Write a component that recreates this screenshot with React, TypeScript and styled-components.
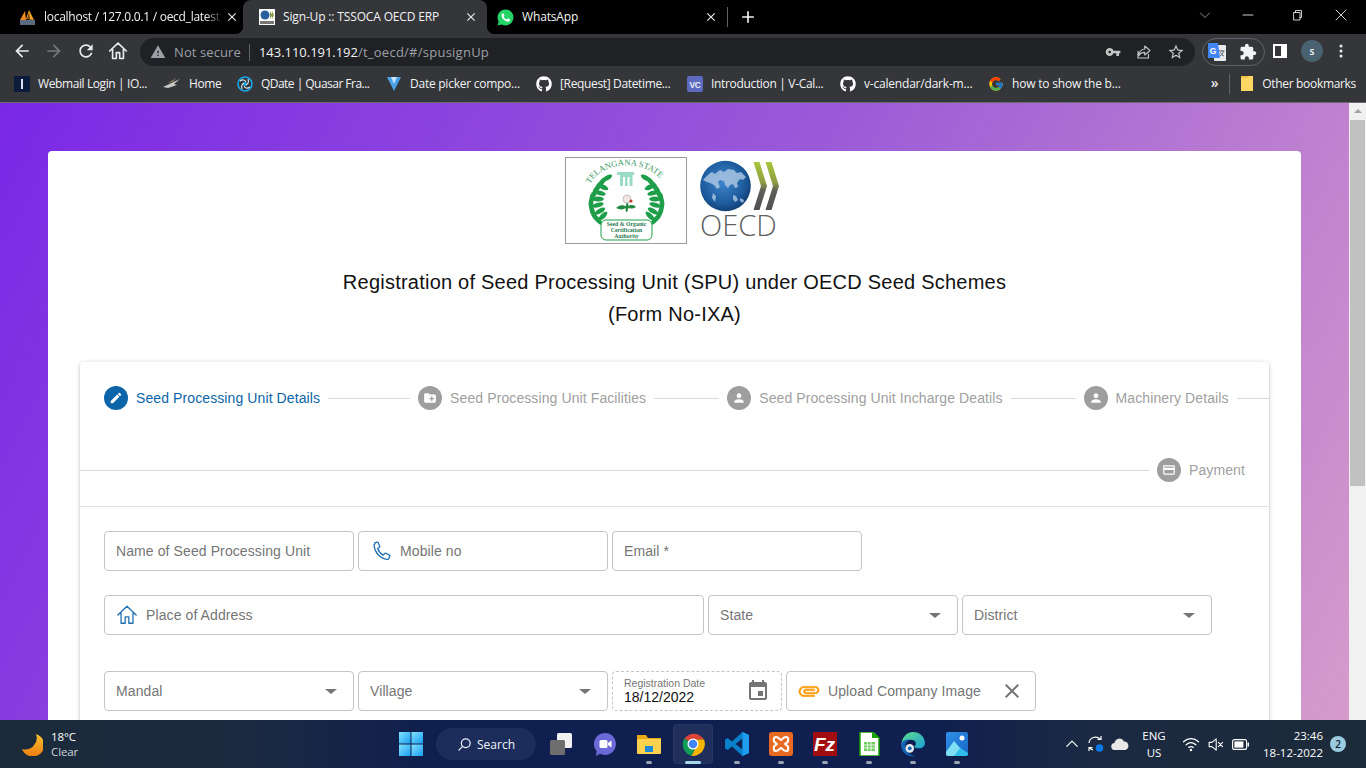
import React from "react";
import styled, { createGlobalStyle } from "styled-components";
import { FaGithub } from "react-icons/fa";
import { FcGoogle } from "react-icons/fc";

const GlobalStyle = createGlobalStyle`
  html, body { margin: 0; padding: 0; overflow: hidden; background: #000; }
  * { box-sizing: border-box; }
`;

const uiFont = `"Open Sans", "Noto Sans", sans-serif`;
const pageFont = `"Liberation Sans", Arial, sans-serif`;

const Screen = styled.div`
  width: 1366px; height: 768px; display: flex; flex-direction: column; overflow: hidden;
`;

/* ---------- browser chrome ---------- */
const TabStrip = styled.div`
  height: 34px; background: #000; display: flex; align-items: stretch; padding-left: 8px; flex: none;
`;
const Tab = styled.div<{ $w: number; $active?: boolean; $pad: number }>`
  position: relative; width: ${p => p.$w}px; padding-left: ${p => p.$pad}px; display: flex; align-items: center; gap: 8px;
  background: ${p => (p.$active ? "#35363a" : "transparent")};
  border-radius: ${p => (p.$active ? "8px 8px 0 0" : "0")};
  font: 12px ${uiFont}; color: #f1f3f4;
  ${p => p.$active && `
    &::before, &::after { content: ""; position: absolute; bottom: 0; width: 8px; height: 8px; }
    &::before { left: -8px; background: radial-gradient(circle at 0 0, #000 8px, #35363a 8.5px); }
    &::after { right: -8px; background: radial-gradient(circle at 100% 0, #000 8px, #35363a 8.5px); }
  `}
`;
const TabTitle = styled.span<{ $fade?: boolean }>`
  flex: 1; white-space: nowrap; overflow: hidden; letter-spacing: -0.15px; padding-bottom: 1px;
  ${p => p.$fade && `
    letter-spacing: -0.27px; margin-right: -7px;
    mask-image: linear-gradient(90deg, #000 90%, transparent 100%);
  `}
`;
const TabClose = styled.span<{ $mr?: number }>`
  width: 16px; height: 16px; margin-right: ${p => p.$mr ?? 8}px; display: flex; align-items: center; justify-content: center; flex: none;
`;
const TabDivider = styled.div`
  width: 1px; height: 20px; background: #5f6368; align-self: center; flex: none;
`;
const NewTab = styled.div`
  width: 40px; display: flex; align-items: center; justify-content: center; flex: none;
`;
const WindowControls = styled.div`
  margin-left: auto; display: flex; align-items: center; padding-right: 10px; padding-bottom: 4px;
`;
const WinButton = styled.div<{ $w: number }>`
  width: ${p => p.$w}px; height: 28px; display: flex; align-items: center; justify-content: center;
`;

const Toolbar = styled.div`
  height: 32px; background: #35363a; display: flex; align-items: flex-start; flex: none; padding-left: 6px;
`;
const NavButton = styled.div`
  width: 32px; height: 32px; display: flex; align-items: center; justify-content: center; padding-top: 2px;
`;
const Omnibox = styled.div`
  width: 1055px; height: 28px; margin: 4px 0 0 6px; border-radius: 14px; background: #202124;
  display: flex; align-items: center; padding-left: 10px; font: 13px ${uiFont}; color: #9aa0a6; flex: none;
`;
const SecureText = styled.span`
  margin-left: 8px; letter-spacing: 0.1px;
`;
const OmniDivider = styled.span`
  width: 1px; height: 17px; background: #5f6368; margin: 0 9px 0 8px;
`;
const UrlHost = styled.span`
  color: #f1f3f4; font-weight: 500; letter-spacing: -0.03px;
`;
const UrlPath = styled.span`
  letter-spacing: 0.25px;
`;
const OmniActions = styled.div`
  margin-left: auto; display: flex; align-items: center; gap: 14px; padding-right: 10px;
`;
const ExtensionPill = styled.div`
  width: 63px; height: 28px; margin: 4px 0 0 7px; border: 1px solid #5f6368; border-radius: 14px;
  display: flex; align-items: center; gap: 11px; padding-left: 3px; flex: none;
`;
const SideButton = styled.div`
  width: 30px; height: 32px; display: flex; align-items: center; justify-content: center; flex: none; padding-top: 2px;
`;
const Avatar = styled.div`
  width: 22px; height: 22px; border-radius: 50%; background: #4a6170; color: #fff; margin-top: 6px; margin-left: 6px;
  font: 600 10px ${uiFont}; display: flex; align-items: center; justify-content: center; flex: none;
`;
const MenuDots = styled.div`
  width: 30px; height: 32px; margin-left: 3px; display: flex; align-items: center; justify-content: center; padding-top: 2px;
`;

const BookmarkBar = styled.div`
  height: 37px; background: #35363a; border-bottom: 1px solid #6b6b6e; display: flex; align-items: center;
  padding: 0 0 1px 14px; font: 12px ${uiFont}; color: #f1f3f4; flex: none;
`;
const Bookmark = styled.div<{ $w: number; $ls: number }>`
  width: ${p => p.$w}px; display: flex; align-items: center; gap: 8px; white-space: nowrap; flex: none;
  letter-spacing: ${p => p.$ls}px;
`;
const BookmarkEnd = styled.div`
  margin-left: auto; display: flex; align-items: center; padding-right: 10px; white-space: nowrap; letter-spacing: -0.32px;
`;
const BookmarkDivider = styled.span`
  width: 1px; height: 20px; background: #5f6368; margin: 0 10px 0 11px;
`;
const Chevrons = styled.span`
  font: 600 14px ${uiFont}; color: #e8eaed; margin-bottom: 2px;
`;
const OtherLabel = styled.span`
  margin-left: 8px;
`;

/* ---------- page ---------- */
const Viewport = styled.div`
  height: 617px; display: flex; flex: none; overflow: hidden;
`;
const Page = styled.main`
  width: 1349px; flex: none; padding: 48px 48px 0;
  background: linear-gradient(118deg, #7a28e6 0%, #9a5ad8 50%, #d69bcb 100%);
`;
const Card = styled.section`
  background: #fff; border-radius: 4px 4px 0 0; padding: 6px 32px 0; min-height: 620px;
`;
const LogoRow = styled.div`
  display: flex; justify-content: center; gap: 13px; padding-right: 4px;
`;
const Title = styled.h1`
  margin: 22px 0 32px; font: 400 20px/32px ${pageFont}; color: #111; text-align: center; letter-spacing: 0.23px;
`;
const InnerCard = styled.div`
  background: #fff; border-radius: 4px 4px 0 0;
  box-shadow: 0 1px 5px rgba(0,0,0,.2), 0 2px 2px rgba(0,0,0,.14), 0 3px 1px -2px rgba(0,0,0,.12);
`;
const Stepper = styled.div`
  padding-top: 24px; border-bottom: 1px solid #e0e0e0; height: 145px;
`;
const StepRow = styled.div<{ $last?: boolean }>`
  display: flex; align-items: center; height: 24px; gap: 8px;
  padding-left: ${p => (p.$last ? 0 : 24)}px; padding-right: ${p => (p.$last ? 24 : 0)}px;
  margin-bottom: 48px;
`;
const StepIcon = styled.span<{ $on?: boolean }>`
  width: 24px; height: 24px; border-radius: 50%; flex: none; display: flex; align-items: center; justify-content: center;
  background: ${p => (p.$on ? "#0b65a8" : "#9e9e9e")};
`;
const StepLabel = styled.span<{ $on?: boolean }>`
  font: 14px ${pageFont}; white-space: nowrap; letter-spacing: 0.1px; color: ${p => (p.$on ? "#0b65a8" : "#a0a0a0")};
`;
const StepLine = styled.span<{ $w?: number }>`
  height: 1px; background: #dcdcdc; flex: ${p => (p.$w ? `0 0 ${p.$w}px` : "1")};
`;
const Form = styled.div`
  padding: 24px 24px 0; display: flex; flex-direction: column;
`;
const FieldRow = styled.div<{ $gap: number }>`
  display: flex; gap: 4px; margin-bottom: ${p => p.$gap}px;
`;
const Field = styled.div<{ $w?: number; $dashed?: boolean }>`
  width: ${p => p.$w ?? 250}px; height: 40px; flex: none; display: flex; align-items: center; gap: 8px; padding: 0 11px;
  border: 1px ${p => (p.$dashed ? "dashed" : "solid")} #c4c4c4; border-radius: 4px;
  font: 14px ${pageFont}; color: #757575; letter-spacing: 0.1px;
`;
const FieldText = styled.span`
  flex: 1; white-space: nowrap;
`;
const DateStack = styled.div`
  flex: 1; display: flex; flex-direction: column; color: #111; line-height: 15px; letter-spacing: 0;
`;
const DateLabel = styled.span`
  font-size: 10.5px; line-height: 13px; color: #757575; margin-top: -1px;
`;
const CaretDown = styled.span`
  width: 0; height: 0; border-left: 6px solid transparent; border-right: 6px solid transparent; border-top: 5px solid #757575;
  margin-right: 5px;
`;
const AttachGlyph = styled.span`
  display: flex; transform: rotate(90deg);
  svg { stroke: #ff9800; stroke-width: 0.7; }
`;

/* ---------- scrollbar ---------- */
const Scrollbar = styled.div`
  width: 17px; flex: none; background: #f1f1f1; display: flex; flex-direction: column; align-items: center;
`;
const ScrollArrow = styled.span`
  width: 0; height: 0; margin: 6px 0 7px; border-left: 4px solid transparent; border-right: 4px solid transparent; border-bottom: 4px solid #a3a3a3;
`;
const ScrollThumb = styled.div`
  width: 15px; height: 366px; background: #c1c1c1;
`;

/* ---------- taskbar ---------- */
const Taskbar = styled.footer`
  height: 48px; flex: none; display: flex; align-items: center; color: #fff; font: 11.5px ${uiFont};
  background: linear-gradient(90deg, #1c2b39 0%, #1b2a40 18%, #0f1f4f 32%, #0f1f4f 68%, #1b2a42 80%, #1c2b39 100%);
`;
const Weather = styled.div`
  width: 389px; flex: none; display: flex; align-items: center; gap: 8px; padding-left: 19px;
`;
const WeatherText = styled.div`
  line-height: 15px; letter-spacing: -0.1px;
`;
const Muted = styled.div`
  color: #cfd4da;
`;
const TaskSlot = styled.div<{ $active?: boolean }>`
  position: relative; width: 44px; height: 40px; flex: none; display: flex; align-items: center; justify-content: center;
  border-radius: 4px;
  ${p => p.$active && "background: rgba(255,255,255,.07); box-shadow: inset 0 0 0 1px rgba(255,255,255,.04); width: 40px; margin: 0 2px;"}
`;
const RunDot = styled.span<{ $active?: boolean }>`
  position: absolute; bottom: 0; left: 50%; transform: translateX(-50%); height: 3px; border-radius: 2px;
  width: ${p => (p.$active ? 16 : 6)}px; background: ${p => (p.$active ? "#a6d8ec" : "#9aa3b2")};
`;
const SearchPill = styled.div`
  width: 100px; height: 32px; margin: 0 3px; flex: none; border-radius: 16px; background: #1c2d5c;
  display: flex; align-items: center; justify-content: center; gap: 5px; font: 12px ${uiFont}; color: #f2f4f8;
`;
const Tray = styled.div`
  margin-left: auto; display: flex; align-items: center; height: 100%;
`;
const TrayIcon = styled.div<{ $w: number }>`
  width: ${p => p.$w}px; flex: none; display: flex; align-items: center; justify-content: center;
`;
const TrayText = styled.div<{ $w: number; $right?: boolean }>`
  width: ${p => p.$w}px; flex: none; text-align: ${p => (p.$right ? "right" : "center")}; line-height: 17px; font-size: 11.5px;
`;
const Badge = styled.div`
  width: 16px; height: 16px; border-radius: 50%; background: #9ccbe0; color: #0e2030; margin: 0 20px 0 7px;
  font: 600 10px ${uiFont}; display: flex; align-items: center; justify-content: center; flex: none;
`;

/* ---------- icons ---------- */
const Icon = ({ d, size = 24, fill = "#fff", box = 24 }: { d: string; size?: number; fill?: string; box?: number }) => (
  <svg width={size} height={size} viewBox={`0 0 ${box} ${box}`} fill={fill}><path d={d} /></svg>
);
const P = {
  edit: "M3 17.25V21h3.75L17.81 9.94l-3.75-3.75L3 17.25zM20.71 7.04c.39-.39.39-1.02 0-1.41l-2.34-2.34c-.39-.39-1.02-.39-1.41 0l-1.83 1.83 3.75 3.75 1.83-1.83z",
  folder: "M20 6h-8l-2-2H4c-1.11 0-1.99.89-1.99 2L2 18c0 1.11.89 2 2 2h16c1.11 0 2-.89 2-2V8c0-1.11-.89-2-2-2zm-1 8h-3v3h-2v-3h-3v-2h3V9h2v3h3v2z",
  person: "M12 12c2.21 0 4-1.79 4-4s-1.79-4-4-4-4 1.79-4 4 1.79 4 4 4zm0 2c-2.67 0-8 1.34-8 4v2h16v-2c0-2.66-5.33-4-8-4z",
  payment: "M20 4H4c-1.11 0-1.99.89-1.99 2L2 18c0 1.11.89 2 2 2h16c1.11 0 2-.89 2-2V6c0-1.11-.89-2-2-2zm0 14H4v-6h16v6zm0-10H4V6h16v2z",
  event: "M17 12h-5v5h5v-5zM16 1v2H8V1H6v2H5c-1.11 0-1.99.9-1.99 2L3 19c0 1.1.89 2 2 2h14c1.1 0 2-.9 2-2V5c0-1.1-.9-2-2-2h-1V1h-2zm3 18H5V8h14v11z",
  attach: "M16.5 6v11.5c0 2.21-1.79 4-4 4s-4-1.79-4-4V5c0-1.38 1.12-2.5 2.5-2.5s2.5 1.12 2.5 2.5v10.5c0 .55-.45 1-1 1s-1-.45-1-1V6H10v9.5c0 1.38 1.12 2.5 2.5 2.5s2.5-1.12 2.5-2.5V5c0-2.21-1.79-4-4-4S7 2.79 7 5v12.5c0 3.04 2.46 5.5 5.5 5.5s5.5-2.46 5.5-5.5V6h-1.5z",
  close: "M19 6.41L17.59 5 12 10.59 6.41 5 5 6.41 10.59 12 5 17.59 6.41 19 12 13.41 17.59 19 19 17.59 13.41 12z",
  back: "M20 11H7.83l5.59-5.59L12 4l-8 8 8 8 1.41-1.41L7.83 13H20v-2z",
  forward: "M12 4l-1.41 1.41L16.17 11H4v2h12.17l-5.58 5.59L12 20l8-8z",
  refresh: "M17.65 6.35C16.2 4.9 14.21 4 12 4c-4.42 0-7.99 3.58-7.99 8s3.57 8 7.99 8c3.73 0 6.84-2.55 7.73-6h-2.08c-.82 2.33-3.04 4-5.65 4-3.31 0-6-2.69-6-6s2.69-6 6-6c1.66 0 3.14.69 4.22 1.78L13 11h7V4l-2.35 2.35z",
  warning: "M1 21h22L12 2 1 21zm12-3h-2v-2h2v2zm0-4h-2v-4h2v4z",
  key: "M12.65 10C11.83 7.67 9.61 6 7 6c-3.31 0-6 2.69-6 6s2.69 6 6 6c2.61 0 4.83-1.67 5.65-4H17v4h4v-4h2v-4H12.65zM7 14c-1.1 0-2-.9-2-2s.9-2 2-2 2 .9 2 2-.9 2-2 2z",
  puzzle: "M20.5 11H19V7c0-1.1-.9-2-2-2h-4V3.5C13 2.12 11.88 1 10.5 1S8 2.12 8 3.5V5H4c-1.1 0-1.99.9-1.99 2v3.8H3.5c1.49 0 2.7 1.21 2.7 2.7s-1.21 2.7-2.7 2.7H2V20c0 1.1.9 2 2 2h3.8v-1.5c0-1.49 1.21-2.7 2.7-2.7 1.49 0 2.7 1.21 2.7 2.7V22H17c1.1 0 2-.9 2-2v-4h1.5c1.38 0 2.5-1.12 2.5-2.5S21.88 11 20.5 11z",
  star: "M22 9.24l-7.19-.62L12 2 9.19 8.63 2 9.24l5.46 4.73L5.82 21 12 17.27 18.18 21l-1.63-7.03L22 9.24zM12 15.4l-3.76 2.27 1-4.28-3.32-2.88 4.38-.38L12 6.1l1.71 4.04 4.38.38-3.32 2.88 1 4.28L12 15.4z",
  plus: "M19 13h-6v6h-2v-6H5v-2h6V5h2v6h6v2z",
};

const Stroke = ({ size = 16, color = "#fff", width = 1.5, children, box = 24 }: { size?: number; color?: string; width?: number; box?: number; children: React.ReactNode }) => (
  <svg width={size} height={size} viewBox={`0 0 ${box} ${box}`} fill="none" stroke={color} strokeWidth={width} strokeLinecap="round" strokeLinejoin="round">{children}</svg>
);

const HomeOutline = ({ size, color, width }: { size: number; color: string; width: number }) => (
  <Stroke size={size} color={color} width={width}><path d="M2 12 12 2.500 22 12M5.500 9.500v11.500h4.500V14h4v7h4.500V9.500" /></Stroke>
);

const PhoneOutline = () => (
  <Stroke size={22} color="#1f6fb2" width={1.4}><path d="M5.2 3.2 7.8 2.3c.5-.1.9.1 1.1.5l1.7 4c.2.4 0 .9-.3 1.1L8.4 9.3c.9 3 3.1 5.7 6 7.2l1.7-1.8c.3-.3.8-.4 1.2-.2l3.9 2c.4.2.6.7.4 1.1l-1.1 2.5c-.3.7-1.1 1.1-1.9 1-7.700-.9-13.400-7.500-14.200-14.800-.1-.9.1-1.800 1-2.100z" /></Stroke>
);

/* favicons */
const PmaFav = () => (
  <svg width="17" height="17" viewBox="0 0 17 17">
    <path d="M1 11 6 2l1 9z" fill="#f08a1d" /><path d="M7 10 10 1l5 10z" fill="#f5a623" /><path d="M8 10l2-7 1 7z" fill="#7a4310" />
    <rect x="1" y="11" width="15" height="5" fill="#5a6a80" />
  </svg>
);
const OecdFav = () => (
  <svg width="16" height="16" viewBox="0 0 16 16">
    <rect width="16" height="16" fill="#fff" /><circle cx="6" cy="6" r="4.5" fill="#2a5f9e" /><path d="M11 2l2.5 4L11 10zM13 2l2 4-2 4z" fill="#8a9a4a" />
    <rect x="1" y="12" width="14" height="3" fill="#777" />
  </svg>
);
const WhatsAppFav = () => (
  <svg width="17" height="17" viewBox="0 0 17 17">
    <path d="M8.500.5a8 8 0 1 1-3.900 15L.6 16.500l1.100-3.900A8 8 0 0 1 8.500.5z" fill="#25d366" />
    <path d="M5.900 4.300c.3 0 .6 0 .8.500l.7 1.500c.1.300 0 .6-.2.800l-.6.700c.7 1.300 1.700 2.200 3 2.800l.8-.9c.2-.2.500-.3.800-.2l1.500.7c.4.200.5.500.4.800-.2 1.100-1.200 1.800-2.300 1.700-3-.4-6-3.200-6.300-6.200-.1-1 .5-1.900 1.400-2.200z" fill="#fff" />
  </svg>
);
const WebmailFav = () => (
  <svg width="16" height="16" viewBox="0 0 16 16"><rect width="16" height="16" fill="#0b1b3a" /><rect x="7" y="3" width="2" height="10" fill="#d8e0ee" /></svg>
);
const HomeFav = () => (
  <svg width="18" height="16" viewBox="0 0 18 16"><path d="M0 11 17 3l-6 5 3 1-9 3z" fill="#c9c9c9" /><path d="M5 7l8-5-3 4z" fill="#8c7a60" /></svg>
);
const QuasarFav = () => (
  <svg width="16" height="16" viewBox="0 0 16 16" fill="none">
    <circle cx="8" cy="8" r="7" stroke="#19a6e6" strokeWidth="1.6" /><circle cx="8" cy="8" r="2" fill="#19a6e6" />
    <path d="M3 5c3-2 5-1 6 1M13 11c-3 2-5 1-6-1M5 13c-1-3 0-5 2-6M11 3c1 3 0 5-2 6" stroke="#d8eef9" strokeWidth="1.1" />
  </svg>
);
const VFav = () => (
  <svg width="16" height="16" viewBox="0 0 16 16"><path d="M1 1h14L8 15z" fill="#4aa3e8" /><path d="M5 1h6L8 8z" fill="#c5e4fa" /></svg>
);
const VcFav = () => (
  <svg width="16" height="16" viewBox="0 0 16 16">
    <rect width="16" height="16" rx="2" fill="#5c6bc0" />
    <text x="8" y="11.5" textAnchor="middle" fontSize="8.5" fontWeight="700" fontFamily={pageFont} fill="#e8eaf6">VC</text>
  </svg>
);
const BookmarkFolder = () => (
  <svg width="14" height="17" viewBox="0 0 14 17"><path d="M1 1h12v15H1z" fill="#fdd663" /><path d="M1 1h7v2H1z" fill="#f4c542" /></svg>
);
const TranslateIcon = () => (
  <svg width="22" height="22" viewBox="0 0 22 22">
    <rect x="8" y="4" width="12" height="16" rx="1" fill="#e8eaed" />
    <path d="M2 2h10l2 15H2z" fill="#4285f4" />
    <text x="7" y="12.500" textAnchor="middle" fontSize="8.500" fontWeight="700" fontFamily={pageFont} fill="#fff">G</text>
    <path d="M13 10h5.500M15.500 9v1M14 15c2-1 3-3 3.500-5M14.500 11.500c.6 1.600 2 3 3.500 3.500" stroke="#5f6368" strokeWidth="1" fill="none" />
  </svg>
);

/* logos */
const leafPoints: Array<[number, number, number]> = [
  [42, 21, -30], [37, 25, -48], [33, 30, -60], [30, 35, -70], [27, 41, -82], [26, 47, -92],
  [27, 53, -102], [29, 58, -115], [33, 63, -130],
  [38, 30, 25], [35, 36, 15], [33, 42, 0], [33, 48, -15], [35, 54, -30], [38, 59, -45],
];
const Wreath = () => (
  <g fill="#1f9e4a">
    {leafPoints.map(([x, y, r], i) => (
      <ellipse key={i} cx={x} cy={y} rx="5.800" ry="2.400" transform={`rotate(${r} ${x} ${y})`} />
    ))}
  </g>
);
const SeedLogo = () => (
  <svg width="122" height="87" viewBox="0 0 122 87" style={{ flex: "none" }}>
    <rect x=".5" y=".5" width="121" height="86" fill="#fff" stroke="#9a9a9a" />
    <defs><path id="logoArc" d="M25 27C38 2 85 2 99 27" /></defs>
    <text fontFamily={`"Liberation Serif", serif`} fontSize="8.600" fill="#3a9a63">
      <textPath href="#logoArc" startOffset="0">TELANGANA STATE</textPath>
    </text>
    <path d="M52 15h17v3h-1.500v11h-3V20h-2v9h-2.500v-9h-2v9h-3V18H52z" fill="#9adcc4" />
    <Wreath />
    <g transform="matrix(-1 0 0 1 123 0)"><Wreath /></g>
    <path d="M61 55c-1-5 0-8 1-10 2 2 2 6 0 10z" fill="#1f8a3e" />
    <path d="M62 50c-4-3-8-2-11 1 4 2 8 2 11-1zM62 50c4-3 7-2 9 0-3 2-6 2-9 0z" fill="#1f8a3e" />
    <circle cx="62" cy="42" r="4" fill="#f0e8e4" stroke="#b0a0a0" strokeWidth=".6" /><circle cx="66" cy="44" r="1.600" fill="#c0392b" />
    <rect x="36" y="63" width="51" height="20" rx="5" fill="#fff" stroke="#1f9e4a" strokeWidth="1" />
    <g fontFamily={`"Liberation Serif", serif`} fontSize="5.800" fontWeight="700" fill="#2a7a50" textAnchor="middle">
      <text x="61.500" y="69">Seed &amp; Organic</text>
      <text x="61.500" y="75">Certification</text>
      <text x="61.500" y="81">Authority</text>
    </g>
  </svg>
);
const OecdLogo = () => (
  <svg width="80" height="87" viewBox="0 0 80 87" style={{ flex: "none" }}>
    <defs>
      <radialGradient id="globe" cx=".45" cy=".42" r=".62">
        <stop offset="0" stopColor="#3f86cc" /><stop offset=".7" stopColor="#1c5a9c" /><stop offset="1" stopColor="#0f3a6c" />
      </radialGradient>
      <linearGradient id="chev" x1="0" y1="0" x2="0" y2="1">
        <stop offset="0" stopColor="#a8c63a" /><stop offset=".42" stopColor="#8f9e44" /><stop offset=".6" stopColor="#5e5e5a" /><stop offset="1" stopColor="#505050" />
      </linearGradient>
    </defs>
    <circle cx="25.500" cy="29" r="25.300" fill="url(#globe)" />
    <path d="M3 23c3-3 5-6 9-8l3 2 5-4 4 2 4-3 6 1 3 3 4-1 5 5-3 3-3-1-3 4 1 4-3 1-2-4-3 1-2 3-3-3-1-4-4-1-2 2 2 5-3 2-3-4-4-2-3-1z" fill="#a8c4e2" opacity=".85" />
    <path d="M33 38l3 1 2 4-3 2-2-3zM13 36l3 3-1 6-3-4zM40 41l4 2-1 3-3-2z" fill="#a8c4e2" opacity=".85" />
    <path d="M53.500 5h6L67 29 59.500 53h-6L61 29z" fill="url(#chev)" />
    <path d="M65.500 5h6L79 29 71.500 53h-6L73 29z" fill="url(#chev)" />
    <text x="0" y="79" fontFamily={`"Open Sans", sans-serif`} fontWeight="300" fontSize="29" fill="#5f5f5f">OECD</text>
  </svg>
);

/* taskbar icons */
const WinLogo = () => (
  <svg width="24" height="24" viewBox="0 0 24 24">
    <defs><linearGradient id="w" x1="0" y1="0" x2="1" y2="1"><stop offset="0" stopColor="#7fe3ff" /><stop offset="1" stopColor="#1a9df0" /></linearGradient></defs>
    <rect x="0" y="0" width="11.500" height="11.500" fill="url(#w)" /><rect x="12.500" y="0" width="11.500" height="11.500" fill="url(#w)" />
    <rect x="0" y="12.500" width="11.500" height="11.500" fill="url(#w)" /><rect x="12.500" y="12.500" width="11.500" height="11.500" fill="url(#w)" />
  </svg>
);
const TaskView = () => (
  <svg width="24" height="24" viewBox="0 0 24 24"><rect x="8" y="1" width="15" height="15" rx="1.500" fill="#f1f1f1" /><rect x="1" y="8" width="15" height="15" rx="1.500" fill="#6e6e6e" /></svg>
);
const MeetIcon = () => (
  <svg width="24" height="24" viewBox="0 0 24 24">
    <path d="M12 1a11 11 0 1 1-5 20.800L3 24l.5-5A11 11 0 0 1 12 1z" fill="#6b69d6" />
    <rect x="6.500" y="8" width="8" height="8" rx="1.500" fill="#fff" /><path d="M15 11l3.500-2.500v7L15 13z" fill="#fff" />
  </svg>
);
const ExplorerIcon = () => (
  <svg width="24" height="24" viewBox="0 0 24 24">
    <path d="M0 3h9l2 3h13v5H0z" fill="#e8a918" /><rect y="7" width="24" height="15" rx="1" fill="#fcd14d" />
    <path d="M8 14h8v6H8z" fill="#1f8ad6" />
  </svg>
);
const ChromeIcon = () => (
  <svg width="24" height="24" viewBox="0 0 24 24">
    <path d="M12 12 3.300 6.500A12 12 0 0 1 23 7.500H12z" fill="#db4437" />
    <path d="M12 12 3.300 6.500A12 12 0 0 0 10.500 23.900L15 14z" fill="#0f9d58" />
    <path d="M12 7.500h11A12 12 0 0 1 10.500 23.900L16 13z" fill="#f4b400" />
    <circle cx="12" cy="12" r="5.500" fill="#fff" /><circle cx="12" cy="12" r="4.300" fill="#4285f4" />
  </svg>
);
const CodeIcon = () => (
  <svg width="24" height="24" viewBox="0 0 24 24">
    <path d="M17.500 0 24 3v18l-6.500 3L7 14.500 2.500 18 0 16.500V7.500L2.500 6 7 9.500zM17.500 6.500 10.500 12l7 5.500z" fill="#0a7fc9" />
    <path d="M17.500 0 24 3v18l-6.500 3z" fill="#1f9cf0" />
  </svg>
);
const XamppIcon = () => (
  <svg width="24" height="24" viewBox="0 0 24 24" fill="none">
    <rect width="24" height="24" rx="3" fill="#e86a22" />
    <path d="M7 5c3 0 4 3 5 3s2-3 5-3c3 0 3 5 0 6l-1 1 1 1c3 1 3 6 0 6-3 0-4-3-5-3s-2 3-5 3c-3 0-3-5 0-6l1-1-1-1C4 10 4 5 7 5z" stroke="#fff" strokeWidth="2" />
  </svg>
);
const FzIcon = () => (
  <svg width="24" height="24" viewBox="0 0 24 24">
    <rect width="24" height="24" fill="#a20e10" />
    <text x="11.500" y="19" textAnchor="middle" fontSize="19" fontStyle="italic" fontWeight="700" fontFamily={pageFont} fill="#fff">Fz</text>
  </svg>
);
const CalcIcon = () => (
  <svg width="24" height="24" viewBox="0 0 24 24">
    <path d="M3 0h13l6 6v18H3z" fill="#fff" stroke="#18a303" strokeWidth="1.500" /><path d="M15 0l7 6h-7z" fill="#18a303" />
    <path d="M7 10h11v9H7z" fill="#6fcf5f" /><path d="M7 13h11M7 16h11M10.500 10v9M14 10v9" stroke="#fff" strokeWidth=".8" />
  </svg>
);
const EdgeIcon = () => (
  <svg width="26" height="26" viewBox="0 0 24 24">
    <defs><linearGradient id="eg" x1="0" y1="0" x2="1" y2="1"><stop offset="0" stopColor="#5fe08a" /><stop offset="1" stopColor="#1a9ed8" /></linearGradient></defs>
    <path d="M12 1c6 0 11 4.500 11 10 0 4-3 5-6 5-2 0-4-1-4-2 3-1 2-6-3-6-4 0-8 3-9 5C2 6 6 1 12 1z" fill="url(#eg)" />
    <path d="M1 13c0-3 4-6 8-5-3 1-5 4-4 8s5 7 9 7c-6 2-13-3-13-10z" fill="#1464b4" />
    <circle cx="9" cy="16" r="4" fill="#dfe8ef" /><circle cx="9" cy="16" r="1.700" fill="#1464b4" />
  </svg>
);
const PhotosIcon = () => (
  <svg width="24" height="24" viewBox="0 0 24 24">
    <defs><linearGradient id="ph" x1="0" y1="0" x2="1" y2="1"><stop offset="0" stopColor="#2f8fe8" /><stop offset="1" stopColor="#1767c4" /></linearGradient></defs>
    <rect x="1" y="0" width="22" height="24" rx="2" fill="url(#ph)" />
    <circle cx="17" cy="6" r="2.500" fill="#fff" /><path d="M1 20 9 9l7 8-5 7H3a2 2 0 0 1-2-2z" fill="#7fe0f5" /><path d="M9 24l6-8 8 5v1a2 2 0 0 1-2 2z" fill="#2fc0ea" />
  </svg>
);

const Moon = () => (
  <svg width="24" height="24" viewBox="0 0 24 24">
    <defs><linearGradient id="moon" x1="0" y1="0" x2="0" y2="1"><stop offset="0" stopColor="#f9c22e" /><stop offset="1" stopColor="#ee7d10" /></linearGradient></defs>
    <path d="M15 1a11.500 11.500 0 0 1-14 15A11.500 11.500 0 1 0 15 1z" fill="url(#moon)" transform="translate(2 1)" />
  </svg>
);

const steps = [
  { label: "Seed Processing Unit Details", d: P.edit, on: true, line: 82 },
  { label: "Seed Processing Unit Facilities", d: P.folder, line: 65 },
  { label: "Seed Processing Unit Incharge Deatils", d: P.person, line: 65 },
  { label: "Machinery Details", d: P.person, line: 33 },
];

const taskIcons: Array<{ icon: React.ReactNode; dot?: boolean; active?: boolean }> = [
  { icon: <TaskView /> },
  { icon: <MeetIcon /> },
  { icon: <ExplorerIcon />, dot: true },
  { icon: <ChromeIcon />, dot: true, active: true },
  { icon: <CodeIcon />, dot: true },
  { icon: <XamppIcon />, dot: true },
  { icon: <FzIcon />, dot: true },
  { icon: <CalcIcon />, dot: true },
  { icon: <EdgeIcon />, dot: true },
  { icon: <PhotosIcon />, dot: true },
];

const App = () => (
  <Screen>
    <GlobalStyle />
    <TabStrip>
      <Tab $w={235} $pad={11}>
        <PmaFav />
        <TabTitle $fade>localhost / 127.0.0.1 / oecd_latest</TabTitle>
        <TabClose $mr={3}><Icon d={P.close} size={14} fill="#e8eaed" /></TabClose>
      </Tab>
      <Tab $w={244} $pad={16} $active>
        <OecdFav />
        <TabTitle>Sign-Up :: TSSOCA OECD ERP</TabTitle>
        <TabClose><Icon d={P.close} size={14} fill="#e8eaed" /></TabClose>
      </Tab>
      <Tab $w={240} $pad={10}>
        <WhatsAppFav />
        <TabTitle>WhatsApp</TabTitle>
        <TabClose><Icon d={P.close} size={14} fill="#e8eaed" /></TabClose>
      </Tab>
      <TabDivider />
      <NewTab><Icon d={P.plus} size={20} fill="#f1f3f4" /></NewTab>
      <WindowControls>
        <WinButton $w={46}><Stroke size={12} color="#c8c8c8" width={1.400}><path d="M3 8l9 9 9-9" /></Stroke></WinButton>
        <WinButton $w={40}><Stroke size={12} color="#fff" width={1.600}><path d="M2 12h20" /></Stroke></WinButton>
        <WinButton $w={58}><Stroke size={12} color="#fff" width={1.600}><path d="M6 7h12v15H6zM9 7V3h12v14h-3" /></Stroke></WinButton>
        <WinButton $w={30}><Stroke size={12} color="#fff" width={1.600}><path d="M2 2l20 20M22 2 2 22" /></Stroke></WinButton>
      </WindowControls>
    </TabStrip>

    <Toolbar>
      <NavButton><Icon d={P.back} size={20} fill="#e8eaed" /></NavButton>
      <NavButton><Icon d={P.forward} size={20} fill="#75787c" /></NavButton>
      <NavButton><Icon d={P.refresh} size={20} fill="#e8eaed" /></NavButton>
      <NavButton><HomeOutline size={20} color="#e8eaed" width={2} /></NavButton>
      <Omnibox>
        <Icon d={P.warning} size={16} fill="#9aa0a6" />
        <SecureText>Not secure</SecureText>
        <OmniDivider />
        <UrlHost>143.110.191.192</UrlHost>
        <UrlPath>/t_oecd/#/spusignUp</UrlPath>
        <OmniActions>
          <Icon d={P.key} size={16} fill="#c4c7c5" />
          <Stroke size={18} color="#c4c7c5" width={1.500}><path d="M4 11v9h14v-5M13 4l7 6-7 6v-3.500C9 12.500 6.500 14 5 17c.4-5 3.500-8.500 8-9z" /></Stroke>
          <Icon d={P.star} size={18} fill="#c4c7c5" />
        </OmniActions>
      </Omnibox>
      <ExtensionPill>
        <TranslateIcon />
        <Icon d={P.puzzle} size={18} fill="#f1f3f4" />
      </ExtensionPill>
      <SideButton>
        <svg width="14" height="14" viewBox="0 0 14 14"><path d="M0 0h14v14H0zM2 2v10h6V2z" fill="#fff" fillRule="evenodd" /></svg>
      </SideButton>
      <Avatar>s</Avatar>
      <MenuDots>
        <svg width="4" height="14" viewBox="0 0 4 14" fill="#e8eaed"><circle cx="2" cy="2" r="1.500" /><circle cx="2" cy="7" r="1.500" /><circle cx="2" cy="12" r="1.500" /></svg>
      </MenuDots>
    </Toolbar>

    <BookmarkBar>
      <Bookmark $w={149} $ls={-0.4}><WebmailFav />Webmail Login | IO...</Bookmark>
      <Bookmark $w={74} $ls={-0.4}><HomeFav />Home</Bookmark>
      <Bookmark $w={149} $ls={-0.53}><QuasarFav />QDate | Quasar Fra...</Bookmark>
      <Bookmark $w={150} $ls={-0.25}><VFav />Date picker compo...</Bookmark>
      <Bookmark $w={151} $ls={-0.35}><FaGithub size={16} color="#fff" />[Request] Datetime...</Bookmark>
      <Bookmark $w={153} $ls={-0.33}><VcFav />Introduction | V-Cal...</Bookmark>
      <Bookmark $w={148} $ls={-0.2}><FaGithub size={16} color="#fff" />v-calendar/dark-m...</Bookmark>
      <Bookmark $w={140} $ls={-0.2}><FcGoogle size={16} />how to show the b...</Bookmark>
      <BookmarkEnd>
        <Chevrons>»</Chevrons>
        <BookmarkDivider />
        <BookmarkFolder />
        <OtherLabel>Other bookmarks</OtherLabel>
      </BookmarkEnd>
    </BookmarkBar>

    <Viewport>
      <Page>
        <Card>
          <LogoRow>
            <SeedLogo />
            <OecdLogo />
          </LogoRow>
          <Title>
            Registration of Seed Processing Unit (SPU) under OECD Seed Schemes
            <br />
            (Form No-IXA)
          </Title>
          <InnerCard>
            <Stepper>
              <StepRow>
                {steps.map(s => (
                  <React.Fragment key={s.label}>
                    <StepIcon $on={s.on}><Icon d={s.d} size={14} /></StepIcon>
                    <StepLabel $on={s.on}>{s.label}</StepLabel>
                    <StepLine $w={s.line} />
                  </React.Fragment>
                ))}
              </StepRow>
              <StepRow $last>
                <StepLine />
                <StepIcon><Icon d={P.payment} size={14} /></StepIcon>
                <StepLabel>Payment</StepLabel>
              </StepRow>
            </Stepper>
            <Form>
              <FieldRow $gap={24}>
                <Field><FieldText>Name of Seed Processing Unit</FieldText></Field>
                <Field><PhoneOutline /><FieldText>Mobile no</FieldText></Field>
                <Field><FieldText>Email *</FieldText></Field>
              </FieldRow>
              <FieldRow $gap={36}>
                <Field $w={600}><HomeOutline size={22} color="#1f6fb2" width={1.400} /><FieldText>Place of Address</FieldText></Field>
                <Field><FieldText>State</FieldText><CaretDown /></Field>
                <Field><FieldText>District</FieldText><CaretDown /></Field>
              </FieldRow>
              <FieldRow $gap={24}>
                <Field><FieldText>Mandal</FieldText><CaretDown /></Field>
                <Field><FieldText>Village</FieldText><CaretDown /></Field>
                <Field $w={170} $dashed>
                  <DateStack>
                    <DateLabel>Registration Date</DateLabel>
                    18/12/2022
                  </DateStack>
                  <Icon d={P.event} size={24} fill="#757575" />
                </Field>
                <Field>
                  <AttachGlyph><Icon d={P.attach} size={22} fill="#ff9800" /></AttachGlyph>
                  <FieldText>Upload Company Image</FieldText>
                  <Icon d={P.close} size={24} fill="#757575" />
                </Field>
              </FieldRow>
            </Form>
          </InnerCard>
        </Card>
      </Page>
      <Scrollbar>
        <ScrollArrow />
        <ScrollThumb />
      </Scrollbar>
    </Viewport>

    <Taskbar>
      <Weather>
        <Moon />
        <WeatherText>
          <div>18°C</div>
          <Muted>Clear</Muted>
        </WeatherText>
      </Weather>
      <TaskSlot><WinLogo /></TaskSlot>
      <SearchPill>
        <Stroke size={15} color="#f2f4f8" width={2}><circle cx="14" cy="10" r="7" /><path d="M9 15l-6 6" /></Stroke>
        Search
      </SearchPill>
      {taskIcons.map((t, i) => (
        <TaskSlot key={i} $active={t.active}>
          {t.icon}
          {t.dot && <RunDot $active={t.active} />}
        </TaskSlot>
      ))}
      <Tray>
        <TrayIcon $w={24}><Stroke size={14} color="#fff" width={2}><path d="M3 16l9-9 9 9" /></Stroke></TrayIcon>
        <TrayIcon $w={24}>
          <svg width="18" height="18" viewBox="0 0 18 18" fill="none" stroke="#fff" strokeWidth="1.200">
            <path d="M2 8a6.500 6.500 0 0 1 11-4M14 1v3.500h-3.500M3 13a6 6 0 0 0 3 2M2 16v-3.500h3.500" /><circle cx="12.500" cy="13" r="3.800" fill="#0f78e8" stroke="none" />
          </svg>
        </TrayIcon>
        <TrayIcon $w={24}>
          <svg width="18" height="12" viewBox="0 0 18 12"><path d="M4 12a3.500 3.500 0 0 1-.5-7A5 5 0 0 1 13 3.500 4.300 4.300 0 0 1 14 12z" fill="#e8e8e8" /></svg>
        </TrayIcon>
        <TrayText $w={44}>ENG<br />US</TrayText>
        <TrayIcon $w={30}>
          <Stroke size={18} color="#fff" width={1.700}><path d="M2 9c6-5.500 14-5.500 20 0M5.500 13c4-3.500 9-3.500 13 0M9 16.500c2-1.500 4-1.500 6 0" /><circle cx="12" cy="20" r=".8" /></Stroke>
        </TrayIcon>
        <TrayIcon $w={19}>
          <Stroke size={17} color="#fff" width={1.500}><path d="M3 9v6h4l6 5V4L7 9zM16 9l6 6M22 9l-6 6" /></Stroke>
        </TrayIcon>
        <TrayIcon $w={31}>
          <svg width="17" height="11" viewBox="0 0 17 11" fill="none"><rect x=".6" y=".6" width="14" height="9.800" rx="2" stroke="#fff" strokeWidth="1.100" /><rect x="2.400" y="2.400" width="9" height="6.200" fill="#fff" /><rect x="15.500" y="3.500" width="1.500" height="4" fill="#fff" /></svg>
        </TrayIcon>
        <TrayText $w={67} $right>23:46<br />18-12-2022</TrayText>
        <Badge>2</Badge>
      </Tray>
    </Taskbar>
  </Screen>
);

export default App;
